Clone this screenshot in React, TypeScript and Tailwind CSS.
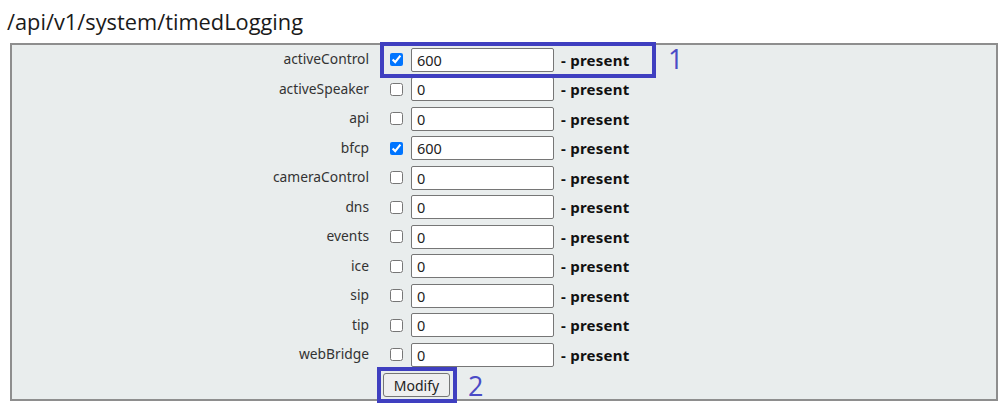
import React from 'react';

interface Item {
  name: string;
  on: boolean;
  value: string;
}

const items: Item[] = [
  { name: 'activeControl', on: true, value: '600' },
  { name: 'activeSpeaker', on: false, value: '0' },
  { name: 'api', on: false, value: '0' },
  { name: 'bfcp', on: true, value: '600' },
  { name: 'cameraControl', on: false, value: '0' },
  { name: 'dns', on: false, value: '0' },
  { name: 'events', on: false, value: '0' },
  { name: 'ice', on: false, value: '0' },
  { name: 'sip', on: false, value: '0' },
  { name: 'tip', on: false, value: '0' },
  { name: 'webBridge', on: false, value: '0' },
];

const App: React.FC = () => {
  return (
    <div className="relative w-[999px] h-[411px] bg-white overflow-hidden font-['Open_Sans',sans-serif] text-[#222]">
      <h1 className="pl-[7px] pt-[8px] h-[43px] text-[21.8px] leading-[28px] text-[#1a1a1a]">/api/v1/system/timedLogging</h1>

      <div className="ml-[10px] w-[988px] h-[358px] border-2 border-[#8e8e8e] bg-[#e9eded]">
        {items.map((it) => (
          <div key={it.name} className="flex items-center h-[29.5px] text-[13.8px]">
            <div className="w-[357px] text-right text-[#333] font-['Noto_Sans',sans-serif]">{it.name}</div>
            <input
              type="checkbox"
              defaultChecked={it.on}
              className="ml-[21px] w-[13px] h-[13px] accent-[#0075ff]"
            />
            <input
              type="text"
              defaultValue={it.value}
              className="ml-[8px] w-[143px] h-[24px] bg-white border border-[#767676] rounded-[2px] px-[5px] text-[14.5px] text-[#222] font-['Noto_Sans',sans-serif]"
            />
            <span className="ml-[7px] font-bold text-[15px] tracking-[0.25px] text-[#111] font-['Noto_Sans',sans-serif]">- present</span>
          </div>
        ))}
        <div className="pl-[371px] pt-[3px]">
          <button className="w-[67px] h-[24px] bg-[#efefef] border border-[#767676] rounded-[3px] text-[14px] text-[#222] font-['Noto_Sans',sans-serif]">
            Modify
          </button>
        </div>
      </div>

      {/* annotations */}
      <div className="absolute left-[380px] top-[42px] w-[276px] h-[36px] border-4 border-[#3f3fc0]" />
      <div className="absolute left-[668px] top-[43px] text-[27px] leading-[32px] text-[#4b4bc6] font-['Open_Sans',sans-serif]">1</div>
      <div className="absolute left-[377px] top-[367px] w-[80px] h-[36px] border-4 border-[#3f3fc0]" />
      <div className="absolute left-[468px] top-[370px] text-[27px] leading-[32px] text-[#4b4bc6] font-['Open_Sans',sans-serif]">2</div>
    </div>
  );
};

export default App;
